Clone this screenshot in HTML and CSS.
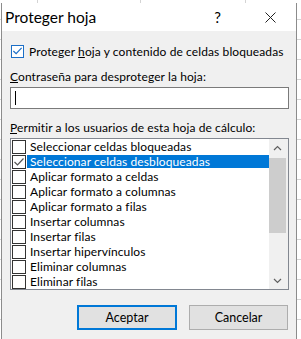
FILE: index.html
```html
<!DOCTYPE html>
<html lang="es">
<head>
  <meta charset="UTF-8" />
  <title>Proteger hoja</title>
  <link rel="stylesheet" href="styles.css">
</head>
<body>
  <div class="sheet">
    <div class="dialog">
      <div class="titlebar">
        <span class="title">Proteger hoja</span>
        <span class="help">?</span>
        <svg class="close" width="11" height="11" viewBox="0 0 11 11">
          <path d="M0.5 0.5 L10.5 10.5 M10.5 0.5 L0.5 10.5" stroke="#222" stroke-width="1" fill="none" />
        </svg>
      </div>

      <div class="content">
        <div class="check-row">
          <span class="box box-blue">
            <svg width="12" height="12" viewBox="0 0 12 12">
              <path d="M1.5 6 L4.5 9 L10.5 2.5" stroke="#1c6fc7" stroke-width="1.3" fill="none" />
            </svg>
          </span>
          <span>Proteger <u>h</u>oja y contenido de celdas bloqueadas</span>
        </div>

        <label class="field-label"><u>C</u>ontraseña para desproteger la hoja:</label>
        <div class="input"><span class="caret"></span></div>

        <label class="field-label list-label"><u>P</u>ermitir a los usuarios de esta hoja de cálculo:</label>
        <div class="listbox">
          <ul class="items">
            <li><span class="box"></span><span class="text">Seleccionar celdas bloqueadas</span></li>
            <li class="selected">
              <span class="box">
                <svg width="12" height="12" viewBox="0 0 12 12">
                  <path d="M1.5 6 L4.5 9 L10.5 2.5" stroke="#555" stroke-width="1.2" fill="none" />
                </svg>
              </span>
              <span class="text">Seleccionar celdas desbloqueadas</span>
            </li>
            <li><span class="box"></span><span class="text">Aplicar formato a celdas</span></li>
            <li><span class="box"></span><span class="text">Aplicar formato a columnas</span></li>
            <li><span class="box"></span><span class="text">Aplicar formato a filas</span></li>
            <li><span class="box"></span><span class="text">Insertar columnas</span></li>
            <li><span class="box"></span><span class="text">Insertar filas</span></li>
            <li><span class="box"></span><span class="text">Insertar hipervínculos</span></li>
            <li><span class="box"></span><span class="text">Eliminar columnas</span></li>
            <li><span class="box"></span><span class="text">Eliminar filas</span></li>
          </ul>
          <div class="scrollbar">
            <div class="arrow">
              <svg width="9" height="6" viewBox="0 0 9 6"><path d="M1 5 L4.5 1.5 L8 5" stroke="#606060" stroke-width="1.2" fill="none" /></svg>
            </div>
            <div class="track">
              <div class="thumb"></div>
            </div>
            <div class="arrow">
              <svg width="9" height="6" viewBox="0 0 9 6"><path d="M1 1 L4.5 4.5 L8 1" stroke="#606060" stroke-width="1.2" fill="none" /></svg>
            </div>
          </div>
        </div>

        <div class="buttons">
          <button class="btn btn-default">Aceptar</button>
          <button class="btn">Cancelar</button>
        </div>
      </div>
    </div>
  </div>
</body>
</html>
```

FILE: styles.css
```css
* {
  box-sizing: border-box;
}

body {
  margin: 0;
  width: 301px;
  height: 339px;
  overflow: hidden;
  font-family: Lato, "Noto Sans", sans-serif;
  font-size: 12px;
  letter-spacing: 0.1px;
  color: #000;
  white-space: nowrap;
}

.sheet {
  width: 301px;
  height: 339px;
  padding-top: 3px;
  background-color: #fff;
  background-image:
    linear-gradient(to right, transparent 37px, #d4d4d4 37px, #d4d4d4 38px, transparent 38px),
    linear-gradient(to right, transparent 140px, #d4d4d4 140px, #d4d4d4 141px, transparent 141px),
    linear-gradient(to right, transparent 245px, #d4d4d4 245px, #d4d4d4 246px, transparent 246px),
    repeating-linear-gradient(to bottom, transparent 0, transparent 19px, #d4d4d4 19px, #d4d4d4 20px);
}

.dialog {
  margin-left: 1px;
  width: 296px;
  height: 336px;
  background: #f0f0f0;
  border-left: 1px solid #8c8c8c;
  border-right: 1px solid #8c8c8c;
}

.titlebar {
  height: 28px;
  background: #fff;
  display: flex;
  align-items: center;
  padding-left: 3px;
  letter-spacing: 0;
}

.title {
  font-size: 15.5px;
  flex: 1;
  margin-top: -1px;
}

.help {
  font-size: 15px;
  margin-right: 44px;
  margin-top: -1px;
}

.close {
  margin-right: 20px;
}

.content {
  padding: 13px 7px 0 8px;
}

.check-row {
  display: flex;
  align-items: center;
  height: 14px;
  gap: 5px;
}

.check-row .box {
  margin-left: 1px;
  width: 13px;
  height: 13px;
}

.box {
  width: 14px;
  height: 14px;
  flex: none;
  border: 1px solid #333;
  background: #fff;
  display: flex;
  align-items: center;
  justify-content: center;
}

.box-blue {
  border-color: #1c6fc7;
}

.field-label {
  display: block;
  margin-top: 11px;
  line-height: 15px;
}

.input {
  margin-top: 3px;
  width: 279px;
  height: 22px;
  background: #fff;
  border: 1px solid #7a7a7a;
  padding: 3px 0 0 4px;
}

.caret {
  display: block;
  width: 1px;
  height: 14px;
  background: #000;
}

.list-label {
  margin-top: 11px;
}

.listbox {
  margin-top: 3px;
  width: 279px;
  height: 152px;
  background: #fff;
  border: 1px solid #828790;
  display: flex;
}

.items {
  list-style: none;
  margin: 0;
  padding: 0 0 0 1px;
  flex: 1;
}

.items li {
  height: 15px;
  display: flex;
  align-items: flex-start;
}

.items .box {
  margin-top: 1px;
}

.items .text {
  flex: 1;
  height: 13px;
  line-height: 13px;
  margin-top: 1px;
  padding-left: 3px;
  margin-left: 1px;
}

.items li.selected .text {
  background: #0078d7;
  color: #fff;
}

.scrollbar {
  width: 19px;
  background: #f0f0f0;
  display: flex;
  flex-direction: column;
  padding-right: 2px;
}

.arrow {
  height: 17px;
  display: flex;
  align-items: center;
  justify-content: center;
}

.track {
  flex: 1;
  padding: 2px 0 0 0;
}

.thumb {
  height: 75px;
  background: #cdcdcd;
}

.buttons {
  display: flex;
  justify-content: flex-end;
  gap: 12px;
  margin-top: 15px;
  padding-right: 1px;
}

.btn {
  width: 99px;
  height: 25px;
  font-family: Lato, "Noto Sans", sans-serif;
  font-size: 12.5px;
  background: #e1e1e1;
  border: 1px solid #adadad;
  padding: 0;
  color: #000;
}

.btn-default {
  width: 100px;
  border: 2px solid #0078d7;
}
```
